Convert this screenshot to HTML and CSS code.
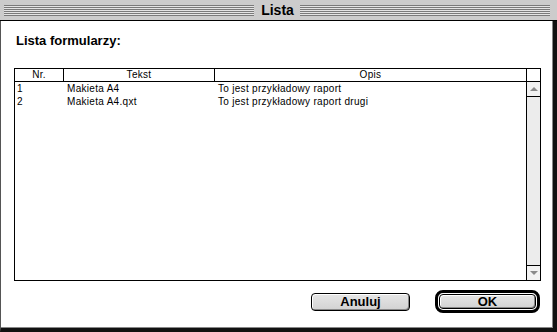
FILE: index.html
```html
<!DOCTYPE html>
<html lang="pl">
<head>
  <meta charset="UTF-8" />
  <title>Lista</title>
  <link rel="stylesheet" href="styles.css">
</head>
<body>

<div class="window">
  <div class="titlebar">
    <span class="stripes"></span>
    <span class="title">Lista</span>
    <span class="stripes"></span>
  </div>

  <div class="body">
    <h1 class="label">Lista formularzy:</h1>

    <div class="list">
      <div class="grid">
        <div class="head">Nr.</div>
        <div class="head">Tekst</div>
        <div class="head last">Opis</div>

        <div class="cell">1</div>
        <div class="cell">Makieta A4</div>
        <div class="cell">To jest przykładowy raport</div>

        <div class="cell">2</div>
        <div class="cell">Makieta A4.qxt</div>
        <div class="cell">To jest przykładowy raport drugi</div>
      </div>

      <div class="scroll">
        <div class="scroll-head"></div>
        <div class="arrow"><span class="tri up"></span></div>
        <div class="track"></div>
        <div class="arrow down-box"><span class="tri down"></span></div>
      </div>
    </div>

    <div class="actions">
      <button class="btn">Anuluj</button>
      <span class="ring"><button class="btn btn-ok">OK</button></span>
    </div>
  </div>
</div>

</body>
</html>
```

FILE: styles.css
```css
* { box-sizing: border-box; }
body {
  margin: 0;
  background: #fff;
  font-family: "Liberation Sans", Arial, sans-serif;
}
.window {
  width: 557px;
  height: 332px;
  display: flex;
  flex-direction: column;
  background: #fff;
}
.titlebar {
  height: 21px;
  background: #cccccc;
  border-bottom: 1px solid #000;
  display: flex;
  align-items: center;
  padding: 0 7px 0 4px;
}
.stripes {
  flex: 1;
  height: 11px;
  background: repeating-linear-gradient(to bottom, #7a7a7a 0 1px, #e4e4e4 1px 2px);
}
.title {
  font-weight: bold;
  font-size: 14px;
  padding: 0 6px 0 7px;
  line-height: 20px;
}
.body {
  flex: 1;
  display: flex;
  flex-direction: column;
  border-left: 1px solid #555;
  border-right: 4px solid #111;
  border-bottom: 4px solid #111;
  box-shadow: inset -1px -1px 0 #888;
  padding: 0 12px 0 13px;
}
.label {
  margin: 12px 0 0 2px;
  font-size: 13px;
  line-height: 16px;
  font-weight: bold;
}
.list {
  margin-top: 19px;
  height: 213px;
  border: 1px solid #000;
  display: flex;
}
.grid {
  flex: 1;
  display: grid;
  grid-template-columns: 49px 151px 1fr;
  grid-template-rows: 13px;
  grid-auto-rows: 13px;
  align-content: start;
  font-size: 10px;
  letter-spacing: 0.3px;
}
.head {
  border-bottom: 1px solid #000;
  border-right: 1px solid #000;
  text-align: center;
  line-height: 12px;
}
.head.last { border-right: none; }
.cell {
  padding-left: 3px;
  line-height: 13px;
  white-space: nowrap;
}
.cell:nth-child(3n+1) { padding-left: 2px; }
.scroll {
  width: 14px;
  border-left: 1px solid #000;
  display: flex;
  flex-direction: column;
}
.scroll-head {
  height: 13px;
  border-bottom: 1px solid #000;
}
.arrow {
  height: 15px;
  background: #f2f2f2;
  border-bottom: 1px solid #000;
  display: flex;
  align-items: center;
  justify-content: center;
}
.down-box {
  border-bottom: none;
  border-top: 1px solid #000;
}
.tri {
  width: 0;
  height: 0;
  border-left: 4px solid transparent;
  border-right: 4px solid transparent;
}
.tri.up { border-bottom: 4px solid #8a8a8a; }
.tri.down { border-top: 4px solid #8a8a8a; }
.track {
  flex: 1;
  background: #ececec;
}
.actions {
  margin-top: 9px;
  display: flex;
  justify-content: flex-end;
  align-items: center;
  gap: 25px;
  padding-right: 1px;
}
.btn {
  font-family: "Liberation Sans", Arial, sans-serif;
  font-weight: bold;
  font-size: 13px;
  width: 99px;
  height: 18px;
  padding: 0;
  line-height: 16px;
  border: 1px solid #000;
  border-radius: 4px;
  background: linear-gradient(#e6e6e6, #d2d2d2);
  box-shadow: inset 1px 1px 0 #fff, inset -1px -1px 0 #888;
  color: #000;
}
.ring {
  display: flex;
  border: 3px solid #000;
  border-radius: 8px;
  padding: 1px;
}
.btn-ok {
  width: 97px;
  height: 15px;
  line-height: 13px;
}
```
